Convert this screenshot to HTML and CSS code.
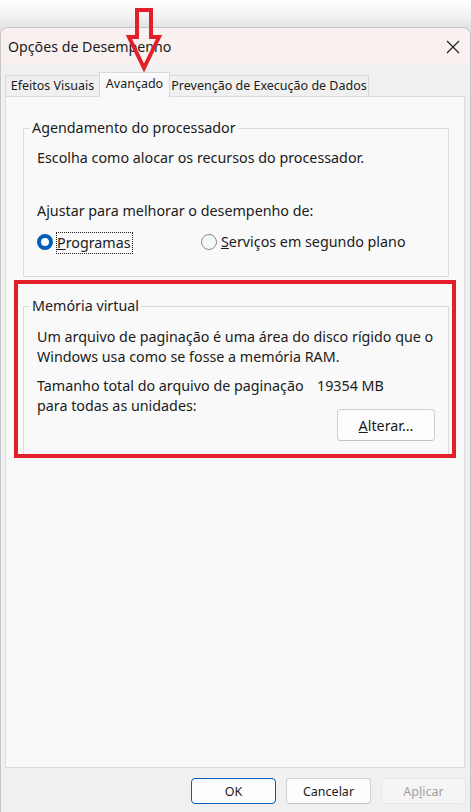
FILE: index.html
```html
<!DOCTYPE html>
<html lang="pt-BR">
<head>
<meta charset="utf-8">
<title>Opções de Desempenho</title>
<link rel="stylesheet" href="styles.css">
</head>
<body>
<div class="window">
  <div class="titlebar">
    <span class="title">Opções de Desempenho</span>
    <svg class="close" width="14" height="14" viewBox="0 0 14 14"><path d="M1 1 L13 13 M13 1 L1 13" stroke="#1b1b1b" stroke-width="1.1" fill="none"/></svg>
  </div>
  <div class="tabs">
    <div class="tab t1">Efeitos Visuais</div>
    <div class="tab t2 active">Avançado</div>
    <div class="tab t3">Prevenção de Execução de Dados</div>
  </div>
  <div class="panel">
    <fieldset class="group g1">
      <legend>Agendamento do processador</legend>
      <p class="line">Escolha como alocar os recursos do processador.</p>
      <p class="line ajustar">Ajustar para melhorar o desempenho de:</p>
      <div class="radios">
        <div class="radio r1"><span class="dot on"></span><span class="focus"><u>P</u>rogramas</span></div>
        <div class="radio r2"><span class="dot"></span><span class="lbl"><u>S</u>erviços em segundo plano</span></div>
      </div>
    </fieldset>
    <fieldset class="group g2">
      <legend>Memória virtual</legend>
      <p class="line desc">Um arquivo de paginação é uma área do disco rígido que o<br>Windows usa como se fosse a memória RAM.</p>
      <div class="size-row">
        <div class="size-label">Tamanho total do arquivo de paginação<br>para todas as unidades:</div>
        <div class="size-value"><span>19354 MB</span><button class="btn alter"><u>A</u>lterar...</button></div>
      </div>
    </fieldset>
  </div>
  <div class="actions">
    <button class="btn default">OK</button>
    <button class="btn">Cancelar</button>
    <button class="btn disabled">Ap<u>l</u>icar</button>
  </div>
</div>
<div class="annot-box"></div>
<svg class="annot-arrow" width="40" height="72" viewBox="0 0 40 72"><polygon points="11,4 25,4 25,31 33,31 18,62 3,31 11,31" fill="none" stroke="#e3202a" stroke-width="4" stroke-linejoin="miter"/></svg>
</body>
</html>
```

FILE: styles.css
```css
* { box-sizing: border-box; }
html, body { margin: 0; padding: 0; }
body {
  width: 471px;
  height: 812px;
  overflow: hidden;
  padding-top: 27px;
  background: linear-gradient(#ffffff 0px, #f4f4f4 14px, #e4e4e4 27px, #e4e4e4 100%);
  font-family: "Noto Sans", "Open Sans", sans-serif;
  color: #1b1b1b;
  position: relative;
}
.window {
  width: 471px;
  height: 785px;
  border: 1px solid #c6c6c6;
  border-bottom: none;
  border-radius: 8px 8px 0 0;
  background: #f0f0f0;
  overflow: hidden;
}
.titlebar {
  height: 37px;
  background: #f9f1f0;
  display: flex;
  align-items: center;
  justify-content: space-between;
  padding: 0 10px 0 7px;
}
.title { font-size: 14.2px; line-height: 20px; }
.close { display: block; }
.tabs {
  height: 31px;
  display: flex;
  align-items: flex-end;
  padding-left: 4px;
  font-size: 12.5px;
}
.tab {
  height: 21px;
  line-height: 20px;
  border: 1px solid #d9d9d9;
  border-bottom: none;
  background: #f0f0f0;
  text-align: center;
  margin-right: -1px;
}
.t1 { width: 95px; }
.t2 { width: 71px; }
.t3 { width: 200px; }
.tab.active {
  height: 25px;
  line-height: 22px;
  background: #f9f9f9;
  margin-bottom: -1px;
  position: relative;
  z-index: 1;
}
.panel {
  width: 460px;
  height: 672px;
  margin-left: 4px;
  border: 1px solid #dcdcdc;
  background: #f9f9f9;
  padding: 0 15px 0 17px;
  font-size: 14.3px;
}
.group {
  margin: 0;
  width: 426px;
  border: 1px solid #dcdcdc;
  padding: 0 13px;
  min-width: 0;
}
.group legend {
  padding: 0 2px;
  margin-left: -7px;
  line-height: 20px;
}
.line { margin: 0; line-height: 20px; }
.g1 { margin-top: 21px; padding-top: 10px; padding-bottom: 24px; }
.ajustar { margin-top: 33px; }
.radios { margin-top: 11px; display: flex; height: 20px; align-items: center; }
.radio { display: flex; align-items: center; }
.r1 { width: 164px; }
.dot {
  width: 16px;
  height: 16px;
  border-radius: 50%;
  border: 1px solid #8a8a8a;
  background: #f7f7f7;
  margin-right: 4px;
  flex: none;
}
.dot.on {
  border: 4.5px solid #005fb8;
  background: #ffffff;
}
.focus {
  border: 1px dotted #202020;
  padding: 0 1px 1px 0;
  margin-left: -1px;
  line-height: 19px;
  position: relative;
  top: 1px;
}
.lbl { line-height: 20px; }
.g2 { margin-top: 19px; padding-top: 11px; padding-bottom: 15px; }
.size-row {
  margin-top: 9px;
  display: flex;
  justify-content: space-between;
  line-height: 20px;
}
.size-value {
  width: 118px;
  display: flex;
  flex-direction: column;
  align-items: flex-start;
}
.btn {
  font-family: "Noto Sans", "Open Sans", sans-serif;
  font-size: 12.5px;
  color: #1b1b1b;
  background: #fdfdfd;
  border: 1px solid #d0d0d0;
  border-bottom-color: #c0c0c0;
  border-radius: 4px;
  padding: 0;
}
.alter {
  align-self: flex-end;
  margin-top: 13px;
  width: 98px;
  height: 32px;
  font-size: 14.3px;
}
.actions {
  display: flex;
  justify-content: flex-end;
  gap: 10px;
  padding-right: 4px;
  margin-top: 10px;
}
.actions .btn { width: 85px; height: 26px; }
.btn.default { border: 1px solid #005fb8; }
.btn.disabled { color: #a0a0a0; background: #f5f5f5; border-color: #e6e6e6; }
.annot-box {
  position: absolute;
  left: 14px;
  top: 280px;
  width: 442px;
  height: 178px;
  border: 4px solid #e3202a;
}
.annot-arrow {
  position: absolute;
  left: 126px;
  top: 6px;
}
```
